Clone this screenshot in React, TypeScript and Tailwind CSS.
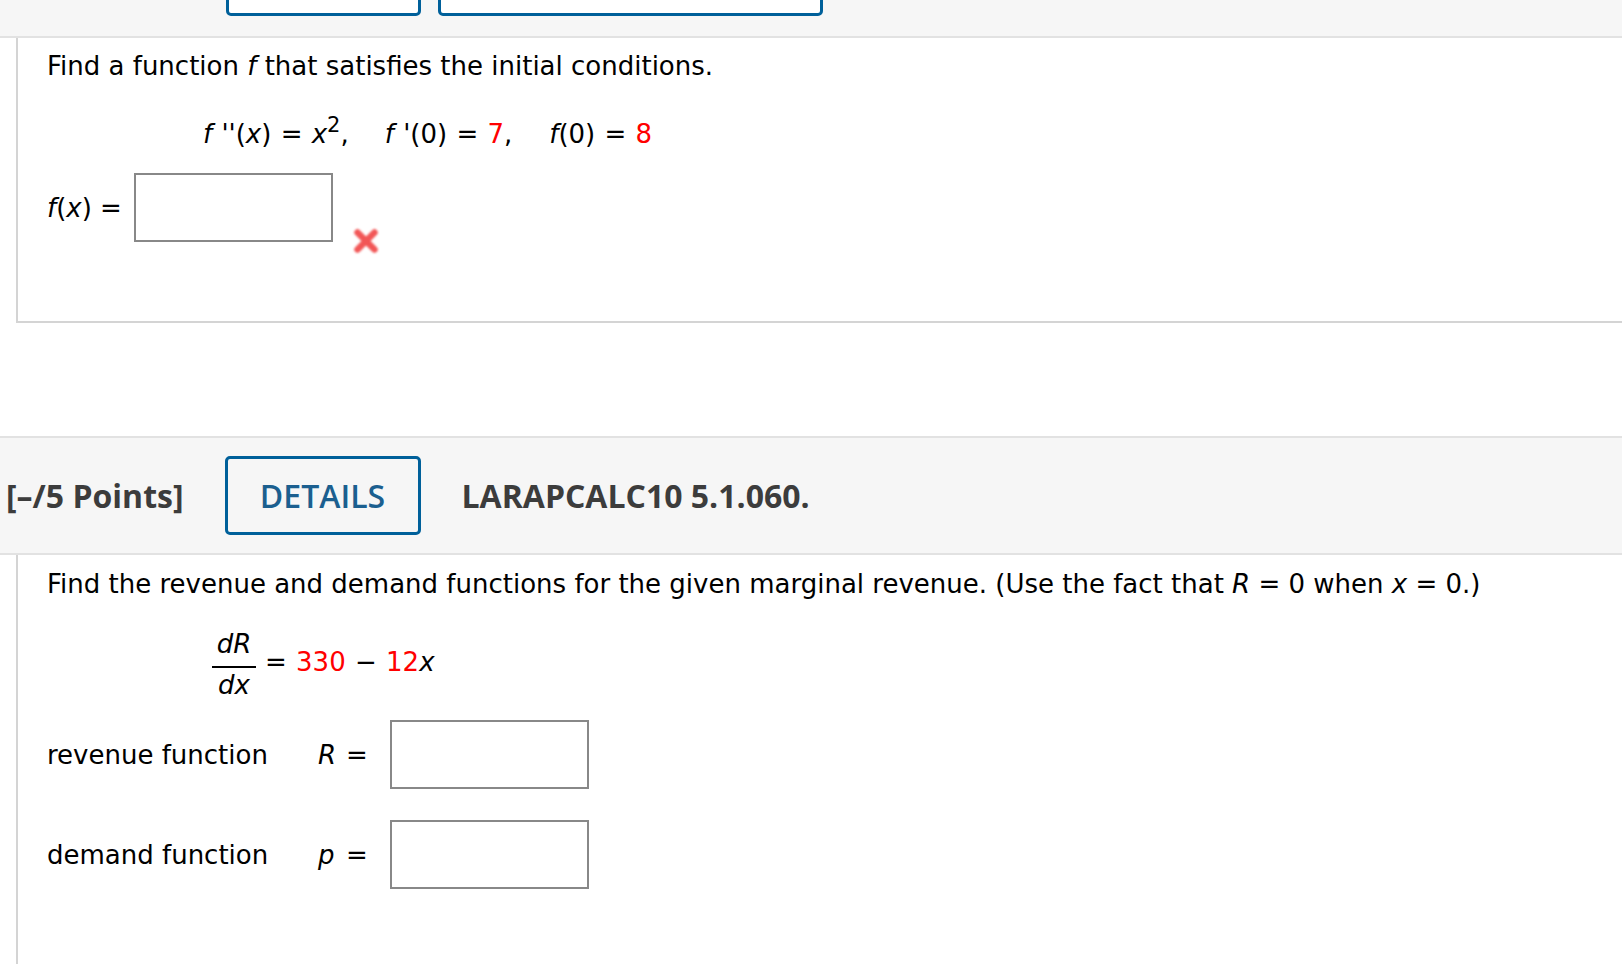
import React from "react"

const body = { fontFamily: '"DejaVu Sans", Verdana, sans-serif' }
const head = { fontFamily: '"Open Sans", "Liberation Sans", sans-serif' }

function AnswerBox() {
  return <div className="w-[199px] h-[69px] border-2 border-[#888888] bg-white shrink-0" />
}

function WrongMark() {
  return (
    <svg width="28" height="28" viewBox="0 0 28 28" className="shrink-0">
      <defs>
        <filter id="soft" x="-30%" y="-30%" width="160%" height="160%">
          <feGaussianBlur stdDeviation="1" />
        </filter>
      </defs>
      <g stroke="#f25656" strokeWidth="6.5" strokeLinecap="round" filter="url(#soft)">
        <line x1="5.5" y1="5.5" x2="22.5" y2="22.5" />
        <line x1="22.5" y1="5.5" x2="5.5" y2="22.5" />
      </g>
    </svg>
  )
}

export default function App() {
  return (
    <div className="min-h-screen w-full bg-white text-black overflow-hidden" style={body}>
      {/* top toolbar, buttons cut off */}
      <div className="h-[38px] bg-[#f6f6f6] border-b-2 border-[#e2e2e2] flex items-start pl-[226px] gap-[17px] overflow-hidden">
        <div className="w-[195px] h-[60px] -mt-[44px] border-[3px] border-[#00609a] rounded-[5px] bg-white" />
        <div className="w-[385px] h-[60px] -mt-[44px] border-[3px] border-[#00609a] rounded-[5px] bg-white" />
      </div>

      {/* question 1 */}
      <div className="ml-[16px] h-[285px] border-l-2 border-b-2 border-[#d4d4d4] pl-[29px] pt-[13px] text-[26px] leading-[30px]">
        <p>
          Find a function <i>f</i> that satisfies the initial conditions.
        </p>
        <div className="mt-[38px] ml-[156px] flex items-center whitespace-pre [word-spacing:1px]">
          <span>
            <i>f</i> ''(<i>x</i>) = <i>x</i>
            <sup className="text-[21px] relative -top-[11px]">2</sup>,
          </span>
          <span className="ml-[36px]">
            <i>f</i> '(0) = <span className="text-[#ff0000]">7</span>,
          </span>
          <span className="ml-[37px]">
            <i>f</i>(0) = <span className="text-[#ff0000]">8</span>
          </span>
        </div>
        <div className="mt-[24px] flex items-start">
          <div className="w-[87px] h-[69px] flex items-center whitespace-pre">
            <i>f</i>(<i>x</i>) =
          </div>
          <AnswerBox />
          <div className="ml-[19px] mt-[54px]">
            <WrongMark />
          </div>
        </div>
      </div>

      {/* question 2 header */}
      <div className="mt-[113px] h-[119px] bg-[#f6f6f6] border-y-2 border-[#e2e2e2] flex items-center text-[#3c3c3c] font-bold text-[32px]" style={head}>
        <span className="ml-[6px]">[–/5 Points]</span>
        <button className="ml-[41px] w-[196px] h-[79px] border-[3px] border-[#00609a] rounded-[5px] text-[#1b5f8f] flex items-center justify-center font-semibold" style={head}>
          DETAILS
        </button>
        <span className="ml-[41px]">LARAPCALC10 5.1.060.</span>
      </div>

      {/* question 2 body */}
      <div className="ml-[16px] min-h-[420px] border-l-2 border-[#d4d4d4] pl-[29px] pt-[14px] text-[26px] leading-[30px]">
        <p>
          Find the revenue and demand functions for the given marginal revenue. (Use the fact that <i>R</i> = 0 when{" "}
          <i>x</i> = 0.)
        </p>
        <div className="mt-[30px] ml-[165px] flex items-center">
          <div className="flex flex-col items-center">
            <i className="h-[30px]">dR</i>
            <div className="w-[44px] mt-[7px] border-t-2 border-black" />
            <i className="h-[30px] mt-[2px]">dx</i>
          </div>
          <span className="ml-[9px] whitespace-pre relative -top-[3px] [word-spacing:1px]">
            = <span className="text-[#ff0000]">330</span> − <span className="text-[#ff0000]">12</span>
            <i>x</i>
          </span>
        </div>
        <div className="mt-[20px] flex items-center">
          <span className="w-[271px]">revenue function</span>
          <i className="w-[28px]">R</i>
          <span className="w-[44px]">=</span>
          <AnswerBox />
        </div>
        <div className="mt-[31px] flex items-center">
          <span className="w-[271px]">demand function</span>
          <i className="w-[28px]">p</i>
          <span className="w-[44px]">=</span>
          <AnswerBox />
        </div>
      </div>
    </div>
  )
}
